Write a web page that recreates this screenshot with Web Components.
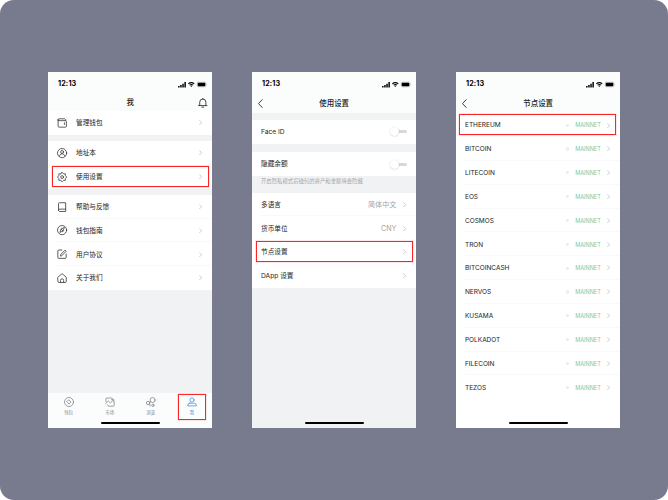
<!DOCTYPE html>
<html lang="zh-CN">
<head>
<meta charset="utf-8">
<title>节点设置</title>
<style>
html,body{margin:0;background:#fff}
body{font-family:Inter,"Noto Sans CJK SC",sans-serif;width:668px;height:500px;overflow:hidden}
</style>
</head>
<body>
<guide-board>
  <phone-screen>
    <nav-header heading="我" kind="root"></nav-header>
    <list-row icon="wallet" label="管理钱包"></list-row>
    <list-gap style="--h:6.6px"></list-gap>
    <list-row icon="contact" label="地址本"></list-row>
    <list-row icon="gear" label="使用设置" marked></list-row>
    <list-gap style="--h:6px"></list-gap>
    <list-row icon="book" label="帮助与反馈" line></list-row>
    <list-row icon="compass" label="钱包指南" line></list-row>
    <list-row icon="edit" label="用户协议" line></list-row>
    <list-row icon="home" label="关于我们"></list-row>
    <tab-bar slot="footer"></tab-bar>
  </phone-screen>
  <phone-screen>
    <nav-header heading="使用设置"></nav-header>
    <list-gap style="--h:6.6px"></list-gap>
    <list-row label="Face ID" toggle></list-row>
    <list-gap style="--h:8.6px"></list-gap>
    <list-row label="隐藏余额" toggle></list-row>
    <list-gap style="--h:16.4px">开启隐私模式后钱包的资产和金额将会隐藏</list-gap>
    <list-row label="多语言" value="简体中文" line></list-row>
    <list-row label="货币单位" value="CNY"></list-row>
    <list-row label="节点设置" marked></list-row>
    <list-row label="DApp 设置"></list-row>
  </phone-screen>
  <phone-screen style="--fill:#fff">
    <nav-header heading="节点设置"></nav-header>
    <list-row label="ETHEREUM" net marked></list-row>
    <list-row label="BITCOIN" net line></list-row>
    <list-row label="LITECOIN" net line></list-row>
    <list-row label="EOS" net line></list-row>
    <list-row label="COSMOS" net line></list-row>
    <list-row label="TRON" net line></list-row>
    <list-row label="BITCOINCASH" net line></list-row>
    <list-row label="NERVOS" net line></list-row>
    <list-row label="KUSAMA" net line></list-row>
    <list-row label="POLKADOT" net line></list-row>
    <list-row label="FILECOIN" net line></list-row>
    <list-row label="TEZOS" net></list-row>
  </phone-screen>
</guide-board>
<script>
const ICONS = {
  wallet: '<path d="M2.2 5.4V3.2Q2.2 1.6 3.8 1.6H15.4L17 3.2V5M2.2 3.6Q2.2 5.2 4 5.2H16.4Q18.4 5.2 18.4 7V16.2Q18.4 18 16.6 18H4Q2.2 18 2.2 16.2V3.6M14.6 9.4V12.6"/>',
  contact: '<circle cx="10" cy="10" r="9"/><circle cx="10" cy="7.8" r="2.9"/><path d="M4.8 15.6C5.4 12.6 7.4 11.6 10 11.6S14.6 12.6 15.2 15.6"/>',
  gear: '<path d="M10 .8L12.8 3.6H16.4V7.2L19.2 10L16.4 12.8V16.4H12.8L10 19.2L7.2 16.4H3.6V12.8L.8 10L3.6 7.2V3.6H7.2Z"/><circle cx="10" cy="10" r="2.8"/>',
  book: '<path d="M17 14H4.8Q3 14 3 16T4.8 18.6H17V1.4H5Q3 1.4 3 3.4V16.4"/>',
  compass: '<circle cx="10" cy="10" r="9"/><path d="M14.2 5.6L11.8 12L5.8 14.4L8.2 8ZM8.2 8L11.8 12"/>',
  edit: '<path d="M9.6 2H3.6Q1.6 2 1.6 4V16.4Q1.6 18.4 3.6 18.4H16Q18 18.4 18 16.4V9.8M7 13.2L7.6 10.4L15.8 2.2L18 4.4L9.8 12.6Z"/>',
  home: '<path d="M1.8 8.4L10 1.2L18.2 8.4V16.6Q18.2 18.6 16.2 18.6H3.8Q1.8 18.6 1.8 16.6ZM7 18.4V14.4Q7 11.4 10 11.4T13 14.4V18.4"/>',
  bell: '<path d="M1.2 15.8H18.8M3.6 15.6V8.6Q3.6 2.2 10 2.2T16.4 8.6V15.6M10 2.2V.8M8 19H12"/>',
  back: '<path d="M13.5 1.5L5.5 10L13.5 18.5"/>',
  next: '<path d="M6 2.5L13.5 10L6 17.5"/>',
  coin: '<circle cx="10" cy="10" r="9"/><path d="M10 6L14 10L10 14L6 10Z"/>',
  market: '<path d="M2 9V3.8Q2 2 3.8 2H13Q15 2 15.4 4M18.4 11V16.4Q18.4 18.4 16.4 18.4H8Q5.6 18.4 5 15.8M1.4 13L6.6 8.2L10.8 11.8L17.4 5.8M13 5.4H17.8V10"/>',
  bubbles: '<circle cx="13.2" cy="6" r="5"/><circle cx="4.2" cy="12" r="3.4"/><circle cx="13.8" cy="16.6" r="2.4"/><path d="M7.2 10.4L9.2 9M7 14Q8.4 15.6 8.2 18"/>',
  person: '<circle cx="10" cy="6" r="4.2"/><path d="M5.4 12.4H14.6Q18.8 12.4 18.8 17.8H1.2Q1.2 12.4 5.4 12.4Z"/>'
};
const icon = (name, size, stroke = 1.6) =>
  `<svg width="${size}" height="${size}" viewBox="0 0 20 20" fill="none" stroke="currentColor" stroke-width="${stroke}" stroke-linejoin="round" stroke-linecap="round">${ICONS[name]}</svg>`;

class Part extends HTMLElement {
  connectedCallback() {
    if (this.shadowRoot) return;
    this.attachShadow({mode: 'open'}).innerHTML = `<style>svg{display:block;flex:none;overflow:visible}${this.css()}</style>${this.html()}`;
  }
}

customElements.define('guide-board', class extends Part {
  css() { return ':host{box-sizing:border-box;display:flex;gap:39.6px;width:668px;height:500px;padding:72px 0 0 48px;background:#787b8e;border-radius:14px}'; }
  html() { return '<slot></slot>'; }
});

customElements.define('phone-screen', class extends Part {
  css() { return `:host{position:relative;display:flex;flex-direction:column;flex:none;width:164.4px;height:355.7px;background:var(--fill,#f1f2f4);overflow:hidden}
    .space{flex:1}
    .bar{position:absolute;left:53px;bottom:3.4px;width:59px;height:2.3px;border-radius:2px;background:#000}`; }
  html() { return '<slot></slot><div class="space"></div><slot name="footer"></slot><div class="bar"></div>'; }
});

customElements.define('nav-header', class extends Part {
  css() {
    const root = this.getAttribute('kind') === 'root';
    return `:host{display:flex;flex-direction:column;flex:none;height:${root ? 38.7 : 41.3}px;background:#fbfdfd;color:#222}
    .status{display:flex;align-items:center;height:24.6px;padding:0 5px 0 10px;color:#000;gap:2.4px}
    .time{flex:1;font-size:7.2px;line-height:10px;font-weight:700;letter-spacing:.12px}
    .nav{display:grid;grid-template-columns:20px 1fr 20px;align-items:center;height:${root ? 8.8 : 14.4}px}
    h1{margin:0;text-align:center;font-size:7.45px;line-height:12px;font-weight:500;color:#222;padding-top:.8px}
    .back{padding-left:4.4px}.bell{padding-left:5.2px}`;
  }
  html() {
    const root = this.getAttribute('kind') === 'root';
    return `<div class="status"><span class="time">12:13</span>
      <svg width="8" height="5.4" viewBox="0 0 16 11"><path d="M0 8h3v3H0zM4.3 6h3v5h-3zM8.6 3.4h3V11h-3zM12.9 0h3v11h-3z"/></svg>
      <svg width="6.6" height="5.4" viewBox="0 0 14 11"><path d="M7 0Q11 0 14 3L12.4 4.7Q10 2.4 7 2.4T1.6 4.7L0 3Q3 0 7 0ZM7 3.8Q9.6 3.8 11.4 5.8L9.7 7.4Q8.6 6.2 7 6.2T4.3 7.4L2.6 5.8Q4.4 3.8 7 3.8ZM7 7.4Q8.2 7.4 8.9 8.3L7 10.6L5.1 8.3Q5.8 7.4 7 7.4Z"/></svg>
      <svg width="10" height="5" viewBox="0 0 20 10"><rect x=".5" y=".5" width="17" height="9" rx="2.4" fill="none" stroke="#888"/><rect x="1.5" y="1.4" width="15" height="7.2" rx="1.4"/><path d="M18.4 3.4v3.4q1-.5 1-1.7t-1-1.7z" fill="#999"/></svg></div>
      <div class="nav"><span class="back">${root ? '' : icon('back', 9.2, 1.9)}</span><h1>${this.getAttribute('heading')}</h1><span class="bell">${root ? icon('bell', 9.6, 1.7) : ''}</span></div>`;
  }
});

customElements.define('list-gap', class extends Part {
  css() { return ':host{display:flex;flex:none;align-items:flex-start;height:var(--h);padding-left:9px;font-size:5.36px;line-height:10.4px;color:#a3a5aa;white-space:nowrap}'; }
  html() { return '<slot></slot>'; }
});

customElements.define('list-row', class extends Part {
  css() { return `:host{position:relative;display:flex;flex:none;align-items:center;box-sizing:border-box;height:23.83px;padding:0 9.4px 0 9px;background:#fff;font-size:6.67px;line-height:10px;color:#222}
    .icon{width:19px;color:#3a3a3a}
    .label{flex:1;white-space:nowrap;padding-top:.5px}
    .label.net{font-size:6.5px}
    .value{font-size:7.1px;color:#a4a4a6;margin-right:5.2px;padding-top:.5px}
    .main{font-size:5.55px;color:#7cc8a3;margin-right:4.8px;padding-top:.5px}
    .dot{box-sizing:border-box;width:3.2px;height:3.2px;border-radius:50%;background:#eef9f3;border:.8px solid #d6f0e2;margin-right:6.2px}
    .next{color:#b9bbc0}
    .line{position:absolute;left:9px;right:0;bottom:0;height:1px;background:#f8f9fa}
    .mark{position:absolute;left:${this.hasAttribute('net') ? 3.5 : 4}px;right:${this.hasAttribute('net') ? 4 : 3.3}px;top:1.2px;height:21px;box-sizing:border-box;border:1px solid #fa2525;box-shadow:0 0 0 .3px #fa252566;z-index:1}
    .switch{position:relative;width:17px;height:10px}
    .switch::before{content:"";position:absolute;left:6px;right:0;top:3.3px;height:3.4px;border-radius:2px;background:#d5d8df}
    .switch::after{content:"";position:absolute;left:0;top:.5px;width:9px;height:9px;border-radius:50%;background:#fff;box-shadow:0 .3px 1.2px #0004}`; }
  html() {
    const at = n => this.getAttribute(n), has = n => this.hasAttribute(n);
    return (has('icon') ? `<span class="icon">${icon(at('icon'), 10.2, 1.6)}</span>` : '') +
      `<span class="label${has('net') ? ' net' : ''}">${at('label')}</span>` +
      (has('value') ? `<span class="value">${at('value')}</span>` : '') +
      (has('net') ? '<span class="dot"></span><span class="main">MAINNET</span>' : '') +
      (has('toggle') ? '<span class="switch"></span>' : `<span class="next">${icon('next', 5.4, 2.8)}</span>`) +
      (has('line') ? '<div class="line"></div>' : '') + (has('marked') ? '<div class="mark"></div>' : '');
  }
});

customElements.define('tab-bar', class extends Part {
  css() { return `:host{display:grid;grid-template-columns:repeat(4,1fr);flex:none;height:34.5px;background:#fbfdfd;color:#82858f}
    .tab{position:relative;display:flex;flex-direction:column;align-items:center;padding-top:3.6px;font-size:4.4px;line-height:6px;gap:3.2px}
    .on{color:#4b93dc}
    .mark{position:absolute;left:6.7px;top:.8px;width:28px;height:26px;box-sizing:border-box;border:1px solid #fa2525;box-shadow:0 0 0 .3px #fa252566}`; }
  html() {
    return [['coin', '钱包'], ['market', '市场'], ['bubbles', '浏览'], ['person', '我']].map(([i, t], k) =>
      `<div class="tab${k === 3 ? ' on' : ''}">${icon(i, 10, 1.6)}<span>${t}</span>${k === 3 ? '<div class="mark"></div>' : ''}</div>`).join('');
  }
});
</script>
</body>
</html>
